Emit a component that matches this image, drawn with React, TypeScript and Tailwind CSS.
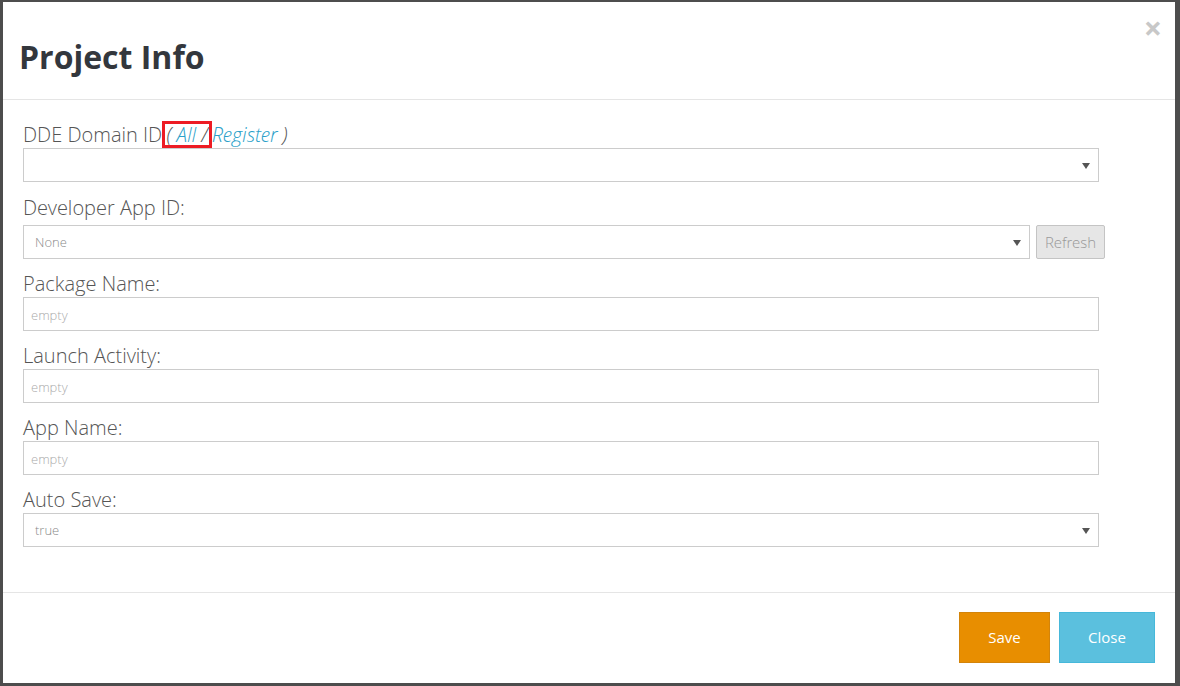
import React from "react";

const font = { fontFamily: '"Open Sans", "Liberation Sans", sans-serif' };
const light = { fontFamily: '"Open Sans Light", "Open Sans", "Liberation Sans", sans-serif' };

function Caret() {
  return (
    <svg viewBox="0 0 8 6" className="h-[6px] w-[8px] fill-[#555]" aria-hidden="true">
      <path d="M0 0h8L4 6z" />
    </svg>
  );
}

function Label({ children, className = "h-[27px]" }: { children: React.ReactNode; className?: string }) {
  return (
    <div className={`text-[20px] leading-[27px] font-light text-[#555] ${className}`} style={light}>
      {children}
    </div>
  );
}

function SelectBox({ value, className = "w-full" }: { value?: string; className?: string }) {
  return (
    <div
      className={`flex h-[34px] shrink-0 items-center justify-between border border-[#ccc] bg-white pt-[2px] pl-[11px] pr-[8px] text-[13px] font-light text-[#888] ${className}`}
      style={light}
    >
      <span>{value}</span>
      <Caret />
    </div>
  );
}

function TextBox({ placeholder }: { placeholder: string }) {
  return (
    <input
      type="text"
      placeholder={placeholder}
      className="h-[34px] w-full border border-[#ccc] bg-white px-[7px] pt-[2px] text-[13px] font-light text-[#555] placeholder:text-[#aaa] focus:outline-none"
      style={light}
    />
  );
}

export default function App() {
  return (
    <div className="h-[686px] w-[1180px] overflow-hidden bg-[#4d4d4d] pt-[2px] pl-[3px]" style={font}>
      <div className="flex h-[681px] w-[1172px] flex-col bg-white">
        <div className="relative h-[98px] border-b border-[#e5e5e5] pl-[16px] pt-[34px]">
          <h1 className="text-[32px] leading-[42px] font-bold text-[#33373d]">Project Info</h1>
          <span className="absolute top-[6px] right-[13px] text-[32px] leading-[40px] font-bold text-[#c8c8c8]">
            ×
          </span>
        </div>

        <div className="flex-1 pl-[20px] pt-[21px]">
          <div className="w-[1076px]">
            <div className="mb-[12px]">
              <Label>
                DDE Domain ID
                <span className="italic">
                  <span className="px-[4px] outline-[3px] outline-[#ed1c24] outline-offset-[-3px]">
                    ( <span className="text-[#2a9fc9]">All</span> /
                  </span>
                  <span className="text-[#2a9fc9]">Register</span> )
                </span>
              </Label>
              <SelectBox />
            </div>

            <div className="mb-[11px]">
              <Label className="h-[31px]">Developer App ID:</Label>
              <div className="flex gap-[6px]">
                <SelectBox value="None" className="w-[1007px]" />
                <button
                  type="button"
                  className="h-[34px] w-[69px] shrink-0 rounded-[2px] border border-[#c4c4c4] bg-[#e6e6e6] text-[15px] font-light text-[#999]"
                  style={light}
                >
                  Refresh
                </button>
              </div>
            </div>

            <div className="mb-[11px]">
              <Label>Package Name:</Label>
              <TextBox placeholder="empty" />
            </div>

            <div className="mb-[11px]">
              <Label>Launch Activity:</Label>
              <TextBox placeholder="empty" />
            </div>

            <div className="mb-[11px]">
              <Label>App Name:</Label>
              <TextBox placeholder="empty" />
            </div>

            <div>
              <Label>Auto Save:</Label>
              <SelectBox value="true" />
            </div>
          </div>
        </div>

        <div className="flex h-[91px] justify-end gap-[9px] border-t border-[#e5e5e5] pt-[19px] pr-[20px]">
          <button
            type="button"
            className="h-[51px] w-[91px] border border-[#d3840a] bg-[#e88e00] text-[15px] text-white"
          >
            Save
          </button>
          <button
            type="button"
            className="h-[51px] w-[96px] border border-[#46b8da] bg-[#5bc0de] text-[15px] text-white"
          >
            Close
          </button>
        </div>
      </div>
    </div>
  );
}
